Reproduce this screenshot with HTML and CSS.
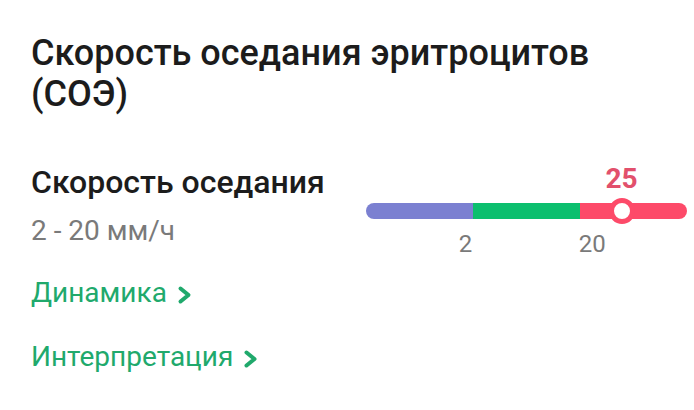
FILE: index.html
```html
<!DOCTYPE html>
<html lang="ru">
<head>
<meta charset="utf-8">
<title>СОЭ</title>
<link rel="stylesheet" href="styles.css">
</head>
<body>
<main class="card">
  <h1 class="card-title">Скорость оседания эритроцитов (СОЭ)</h1>
  <section class="param">
    <div class="param-info">
      <h2 class="param-name">Скорость оседания</h2>
      <p class="param-range">2 - 20 мм/ч</p>
    </div>
    <div class="scale">
      <div class="scale-track">
        <span class="seg seg-low"></span>
        <span class="seg seg-norm"></span>
        <span class="seg seg-high"></span>
        <span class="marker" style="left: 79.6%">
          <span class="marker-value">25</span>
          <span class="marker-knob"></span>
        </span>
      </div>
      <div class="scale-ticks">
        <span class="tick" style="left: 31%">2</span>
        <span class="tick" style="left: 70.5%">20</span>
      </div>
    </div>
  </section>
  <nav class="links">
    <a class="link" href="#">Динамика
      <svg class="chev" viewBox="0 0 16 20" width="16" height="20"><polyline points="3.5,3.5 11.5,10 3.5,16.5"/></svg>
    </a>
    <a class="link" href="#">Интерпретация
      <svg class="chev" viewBox="0 0 16 20" width="16" height="20"><polyline points="3.5,3.5 11.5,10 3.5,16.5"/></svg>
    </a>
  </nav>
</main>
</body>
</html>
```

FILE: styles.css
```css
* { box-sizing: border-box; }

html, body {
  margin: 0;
  background: #ffffff;
}

body {
  font-family: Roboto, "Noto Sans", sans-serif;
  color: #1c1c1c;
}

.card {
  padding: 33px 7px 0 31px;
}

.card-title {
  margin: 0;
  font-size: 36px;
  font-weight: 500;
  line-height: 41px;
  color: #1c1c1c;
  max-width: 620px;
}

.param {
  display: flex;
  align-items: flex-start;
  justify-content: space-between;
  margin-top: 48px;
}

.param-name {
  margin: 0;
  font-size: 32px;
  font-weight: 500;
  line-height: 38px;
  color: #1c1c1c;
}

.param-range {
  margin: 14px 0 0;
  font-size: 28px;
  line-height: 32px;
  color: #7a7a7a;
}

.scale {
  width: 321px;
  padding-top: 40px;
}

.scale-track {
  position: relative;
  display: flex;
  height: 16px;
}

.seg { flex: 1; height: 100%; }
.seg-low { background: #7b80d1; border-radius: 8px 0 0 8px; }
.seg-norm { background: #0bbf6e; }
.seg-high { background: #fd4a69; border-radius: 0 8px 8px 0; }

.marker {
  position: absolute;
  top: 50%;
  width: 0;
  height: 0;
}

.marker-knob {
  position: absolute;
  left: -13px;
  top: -13px;
  width: 26px;
  height: 26px;
  border-radius: 50%;
  background: #ffffff;
  border: 5px solid #fd4a69;
}

.marker-value {
  position: absolute;
  left: -30px;
  width: 60px;
  top: -48px;
  text-align: center;
  font-size: 28px;
  font-weight: 700;
  line-height: 32px;
  color: #e2506c;
}

.scale-ticks {
  position: relative;
  height: 28px;
  margin-top: 11px;
}

.tick {
  position: absolute;
  top: 0;
  transform: translateX(-50%);
  font-size: 24px;
  line-height: 28px;
  color: #7a7a7a;
}

.links {
  display: flex;
  flex-direction: column;
  align-items: flex-start;
  gap: 32px;
  margin-top: 19px;
}

.link {
  display: flex;
  align-items: center;
  gap: 10px;
  font-size: 28px;
  line-height: 32px;
  color: #20a96c;
  text-decoration: none;
}

.chev {
  margin-top: 3px;
  fill: none;
  stroke: #20a96c;
  stroke-width: 4;
  stroke-linecap: round;
  stroke-linejoin: round;
}
```
